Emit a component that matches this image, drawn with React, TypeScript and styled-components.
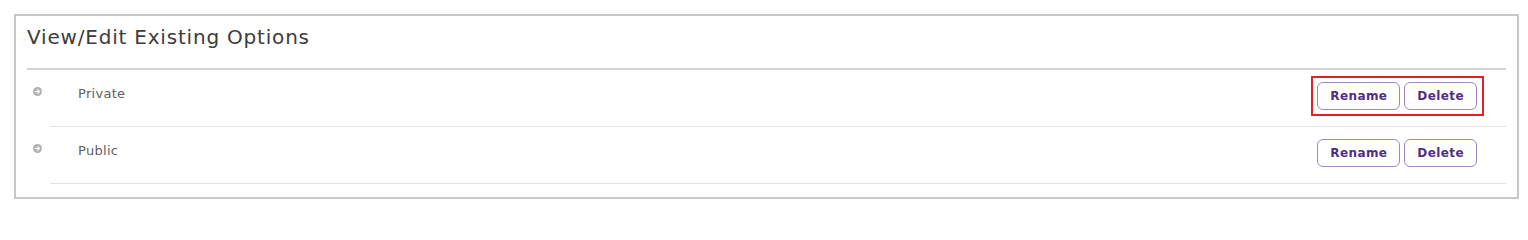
import React from "react";
import styled, { createGlobalStyle } from "styled-components";

const GlobalStyle = createGlobalStyle`
  body {
    margin: 0;
    background: #ffffff;
    font-family: "DejaVu Sans", "Liberation Sans", sans-serif;
  }
`;

type Option = { id: number; name: string; highlighted?: boolean };

const options: Option[] = [
  { id: 1, name: "Private", highlighted: true },
  { id: 2, name: "Public" },
];

const BulletIcon = () => (
  <svg width="9" height="9" viewBox="0 0 9 9">
    <circle cx="4.5" cy="4.5" r="4.5" fill="#b3b3b3" />
    <path
      d="M2.2 4.5h4M4.5 2.6l1.9 1.9-1.9 1.9"
      stroke="#ffffff"
      strokeWidth="1.2"
      fill="none"
    />
  </svg>
);

const App = () => {
  return (
    <Page>
      <GlobalStyle />
      <Panel>
        <Header>
          <Title>View/Edit Existing Options</Title>
        </Header>
        <List>
          {options.map((option) => (
            <Row key={option.id}>
              <BulletCell>
                <BulletIcon />
              </BulletCell>
              <RowBody>
                <Label>{option.name}</Label>
                <ButtonGroup $highlighted={option.highlighted}>
                  <ActionButton>Rename</ActionButton>
                  <ActionButton>Delete</ActionButton>
                </ButtonGroup>
              </RowBody>
            </Row>
          ))}
        </List>
      </Panel>
    </Page>
  );
};

export default App;

const Page = styled.div`
  padding: 14px 0 0 14px;
`;

const Panel = styled.div`
  box-sizing: border-box;
  width: 1505px;
  border: 2px solid #c8c8c8;
  padding-bottom: 13px;
  background: #ffffff;
`;

const Header = styled.div`
  padding: 0 11px;
`;

const Title = styled.h2`
  margin: 0;
  height: 43px;
  padding-top: 9px;
  border-bottom: 2px solid #d4d4d4;
  font-size: 20px;
  font-weight: 400;
  line-height: 24px;
  letter-spacing: 0.8px;
  color: #3c3c3c;
`;

const List = styled.ul`
  list-style: none;
  margin: 0;
  padding: 0 11px;
`;

const Row = styled.li`
  display: flex;
`;

const BulletCell = styled.div`
  box-sizing: border-box;
  width: 23px;
  padding: 17px 0 0 6px;
  line-height: 0;
`;

const RowBody = styled.div`
  flex: 1;
  display: flex;
  align-items: flex-start;
  justify-content: space-between;
  padding: 6px 22px 10px 28px;
  border-bottom: 1px solid #e4e4e4;
`;

const Label = styled.span`
  margin-top: 8px;
  font-size: 13px;
  font-weight: 500;
  line-height: 20px;
  letter-spacing: 0.3px;
  color: #606060;
`;

const ButtonGroup = styled.div<{ $highlighted?: boolean }>`
  display: flex;
  gap: 4px;
  padding: 4px 5px 4px 4px;
  border: 2px solid ${(p) => (p.$highlighted ? "#e5201f" : "transparent")};
`;

const ActionButton = styled.button`
  box-sizing: border-box;
  height: 28px;
  padding: 0 12px;
  background: #ffffff;
  border: 1.5px solid #9f88c6;
  border-radius: 6px;
  font-family: "DejaVu Sans", "Liberation Sans", sans-serif;
  font-size: 12px;
  font-weight: 700;
  letter-spacing: 0.4px;
  color: #4f2f86;
  cursor: pointer;
`;
